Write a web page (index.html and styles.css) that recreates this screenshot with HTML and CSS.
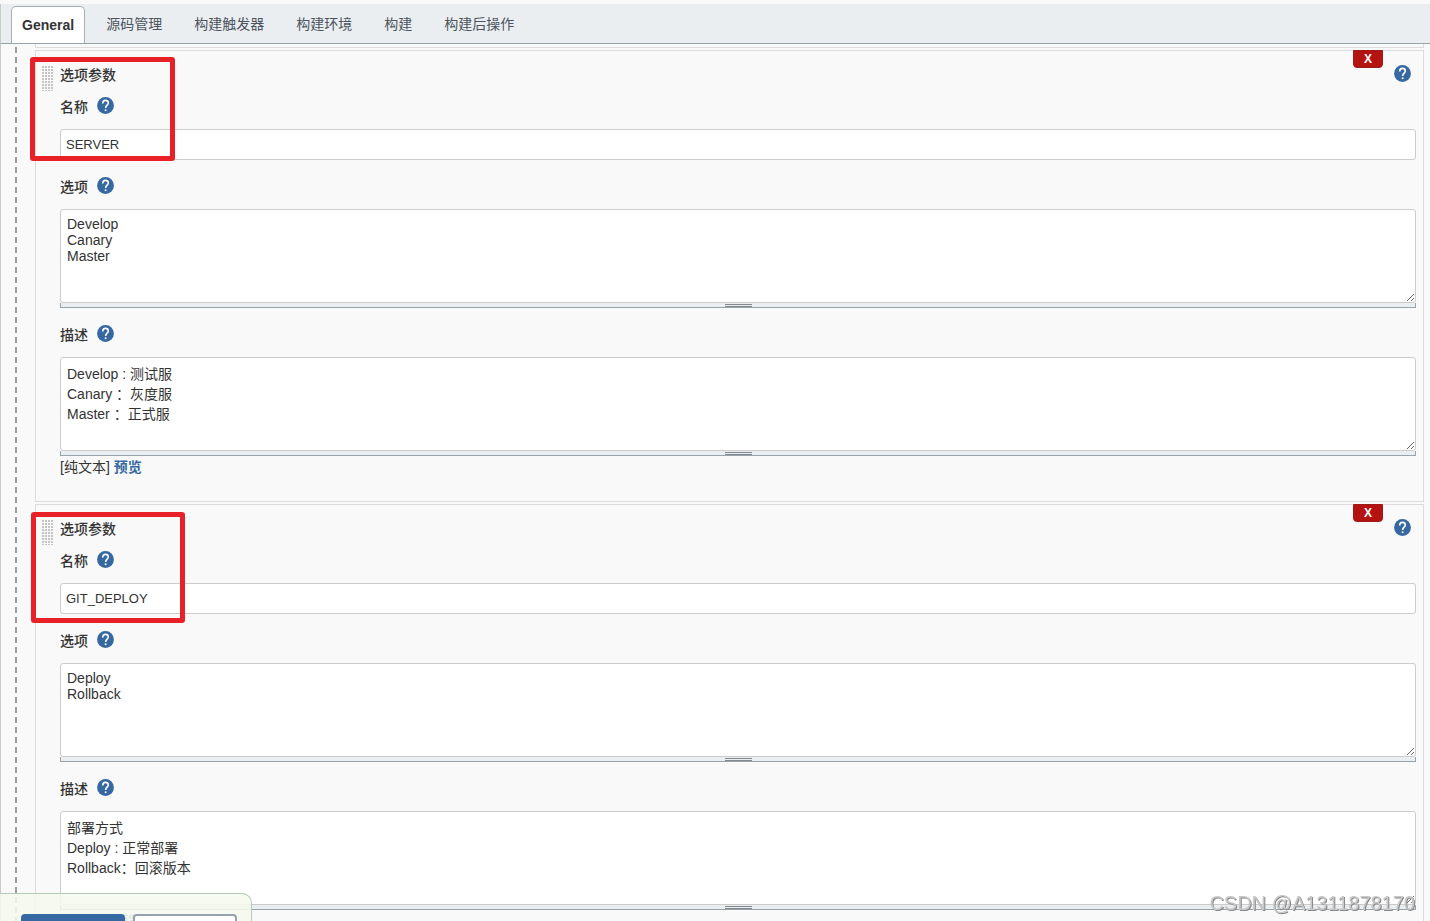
FILE: index.html
```html
<!DOCTYPE html>
<html lang="zh-CN">
<head>
<meta charset="utf-8">
<title>General</title>
<link rel="stylesheet" href="styles.css">
</head>
<body>
<svg class="sprite" aria-hidden="true">
  <symbol id="help" viewBox="0 0 17 17">
    <circle cx="8.5" cy="8.5" r="8.4" fill="#3668a2"/>
    <path d="M5.7 6.4C5.7 4.3 6.9 3.4 8.5 3.4S11.3 4.3 11.3 6C11.3 8 8.6 8.4 8.6 11" fill="none" stroke="#fff" stroke-width="1.6"/>
    <circle cx="8.6" cy="13.2" r="1" fill="#fff"/>
  </symbol>
  <symbol id="grip" viewBox="0 0 27 4">
    <path d="M0 1.5h27M0 3.5h27" stroke="#85878c" stroke-width="1"/>
  </symbol>
</svg>
<div class="page">
  <nav class="tabs">
    <a class="tab tab-active" href="#general">General</a>
    <a class="tab" href="#scm">源码管理</a>
    <a class="tab" href="#triggers">构建触发器</a>
    <a class="tab" href="#env">构建环境</a>
    <a class="tab" href="#build">构建</a>
    <a class="tab" href="#post">构建后操作</a>
  </nav>
  <main class="config">
    <div class="rail"></div>
    <form class="params">
      <div class="param param-previous"></div>

      <section class="param">
        <div class="corner">
          <button class="remove" type="button">X</button>
          <a class="help" href="#help"><svg><use href="#help"/></svg></a>
        </div>
        <span class="drag"></span>
        <h2 class="title">选项参数</h2>
        <div class="label-row"><label for="name1">名称</label><a class="help" href="#help"><svg><use href="#help"/></svg></a></div>
        <input class="text" id="name1" type="text" value="SERVER">
        <div class="label-row"><label for="choices1">选项</label><a class="help" href="#help"><svg><use href="#help"/></svg></a></div>
        <textarea class="area" id="choices1">Develop
Canary
Master</textarea>
        <div class="resizer"><svg><use href="#grip"/></svg></div>
        <div class="label-row"><label for="desc1">描述</label><a class="help" href="#help"><svg><use href="#help"/></svg></a></div>
        <textarea class="area area-desc" id="desc1">Develop : 测试服
Canary ：灰度服
Master ：正式服</textarea>
        <div class="resizer"><svg><use href="#grip"/></svg></div>
        <div class="format">[纯文本] <a class="preview" href="#preview">预览</a></div>
      </section>

      <section class="param">
        <div class="corner">
          <button class="remove" type="button">X</button>
          <a class="help" href="#help"><svg><use href="#help"/></svg></a>
        </div>
        <span class="drag"></span>
        <h2 class="title">选项参数</h2>
        <div class="label-row"><label for="name2">名称</label><a class="help" href="#help"><svg><use href="#help"/></svg></a></div>
        <input class="text" id="name2" type="text" value="GIT_DEPLOY">
        <div class="label-row"><label for="choices2">选项</label><a class="help" href="#help"><svg><use href="#help"/></svg></a></div>
        <textarea class="area" id="choices2">Deploy
Rollback</textarea>
        <div class="resizer"><svg><use href="#grip"/></svg></div>
        <div class="label-row"><label for="desc2">描述</label><a class="help" href="#help"><svg><use href="#help"/></svg></a></div>
        <textarea class="area area-desc" id="desc2">部署方式
Deploy : 正常部署
Rollback：回滚版本</textarea>
        <div class="resizer"><svg><use href="#grip"/></svg></div>
        <div class="format">[纯文本] <a class="preview" href="#preview">预览</a></div>
      </section>
    </form>
  </main>
</div>
<div class="mark mark-server"></div>
<div class="mark mark-deploy"></div>
<div class="actions">
  <button class="action action-primary" type="button" aria-label="保存"></button>
  <button class="action" type="button" aria-label="应用"></button>
</div>
<div class="watermark">CSDN @A1311878170</div>
</body>
</html>
```
FILE: styles.css
```css
* { box-sizing: border-box; }

body {
  margin: 0;
  height: 100vh;
  overflow: hidden;
  background: #f9f9f9;
  color: #333;
  font: 14px/22px "Liberation Sans", "Noto Sans CJK SC", sans-serif;
}

.sprite { position: absolute; width: 0; height: 0; }

.page {
  display: flex;
  flex-direction: column;
  height: 100vh;
  padding-top: 4px;
}

.tabs {
  display: flex;
  flex: none;
  height: 40px;
  padding: 2px 0 0 10px;
  background: #eaeef1;
  border-left: 1px solid #c8cacc;
  border-bottom: 1px solid #98a3aa;
}

.tab {
  padding: 7px 16px;
  color: #4d545d;
  text-decoration: none;
}

.tab-active {
  margin-right: 5px;
  padding: 7px 10px;
  background: #fff;
  border: 1px solid #a5afb5;
  border-bottom: 0;
  border-radius: 5px 5px 0 0;
  color: #333;
  font-weight: bold;
}

.config {
  display: flex;
  flex: 1;
  min-height: 0;
  overflow: hidden;
  padding: 0 6px 0 14px;
  border-left: 1px solid #c8cacc;
}

.rail {
  flex: none;
  width: 2px;
  margin: 3px 18px 0 0;
  background: repeating-linear-gradient(#999da2 0 6px, transparent 6px 10px);
}

.params { flex: 1; min-width: 0; }

.param {
  position: relative;
  display: flex;
  flex-direction: column;
  margin-bottom: 2px;
  padding: 13px 7px 23px 24px;
  border: 1px solid #dcdcdc;
}

.param-previous {
  height: 4px;
  padding: 0;
  border-top: 0;
}

.corner {
  position: absolute;
  top: -1px;
  right: 12px;
  display: flex;
  gap: 11px;
}

.remove {
  width: 30px;
  height: 18px;
  padding: 0;
  border: 1px solid #9c1a18;
  border-radius: 0 0 4px 4px;
  background: #b51212;
  color: #fff;
  font: bold 12px/16px "Liberation Sans", sans-serif;
}

.help { display: block; width: 17px; height: 17px; }
.help svg { display: block; width: 17px; height: 17px; }
.corner .help { margin-top: 15px; }

.drag {
  position: absolute;
  top: 14px;
  left: 5px;
  width: 12px;
  height: 26px;
  background:
    linear-gradient(#f9f9f9 1px, transparent 1px) 0 0 / 3px 3px,
    linear-gradient(90deg, #f9f9f9 1px, #c4c4c4 1px) 0 0 / 3px 3px;
}

.title {
  margin: 0 0 -6px;
  font-size: 14px;
  font-weight: 500;
  line-height: 22px;
}

.label-row {
  display: flex;
  gap: 9px;
  margin: 16px 0 11px;
  font-weight: 500;
}

.label-row .help { margin-top: 1px; }

.text {
  width: 100%;
  height: 31px;
  padding: 0 5px;
  border: 1px solid #ccc;
  border-radius: 3px;
  background: #fff;
  color: #333;
  font: 13px/20px "Liberation Sans", "Noto Sans CJK SC", sans-serif;
}

.area {
  display: block;
  width: 100%;
  height: 94px;
  padding: 6px;
  overflow: hidden;
  resize: vertical;
  border: 1px solid #ccc;
  border-radius: 3px;
  background: #fff;
  color: #333;
  font: 14px/16px "Liberation Sans", "Noto Sans CJK SC", sans-serif;
}

.area-desc { line-height: 20px; }

.resizer {
  display: flex;
  justify-content: center;
  height: 5px;
  background: #eaeef1;
  border: 1px solid #98a3aa;
  border-top: 0;
}

.resizer svg { width: 27px; height: 4px; flex: none; }

.preview {
  color: #3668a2;
  font-weight: bold;
  text-decoration: none;
}

.mark {
  position: absolute;
  border: 5px solid #e82028;
  border-radius: 3px;
}

.mark-server { left: 30px; top: 57px; width: 145px; height: 104px; }
.mark-deploy { left: 31px; top: 512px; width: 154px; height: 111px; }

.actions {
  position: fixed;
  left: 0;
  bottom: 0;
  display: flex;
  gap: 8px;
  height: 28px;
  padding: 20px 14px 0 21px;
  overflow: hidden;
  background: rgba(245, 249, 239, 0.85);
  border: 1px solid #b4cbb8;
  border-width: 1px 1px 0 0;
  border-radius: 0 10px 0 0;
}

.action {
  flex: none;
  width: 104px;
  height: 32px;
  border: 2px solid #98a0b0;
  border-radius: 4px;
  background: #fff;
}

.action-primary { background: #3668a2; border-color: #3668a2; }

.watermark {
  position: fixed;
  right: 15px;
  bottom: 6px;
  color: #c8c8c8;
  font-size: 20px;
  line-height: 24px;
  text-shadow: 1px 1px 0 #888;
}
```
